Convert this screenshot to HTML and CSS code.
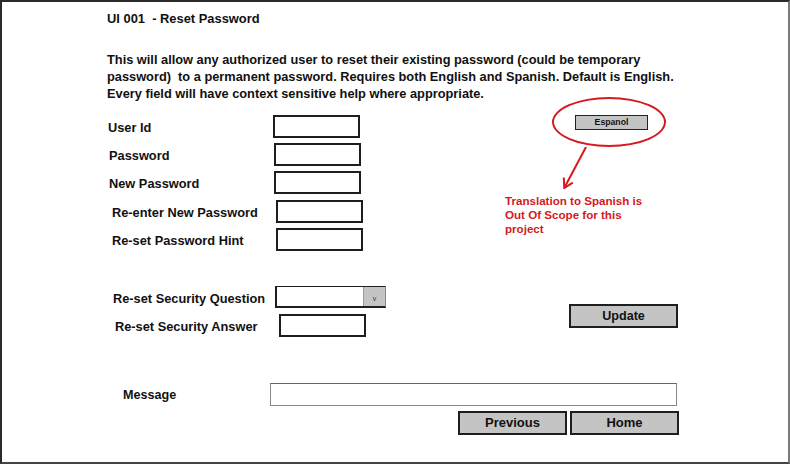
FILE: index.html
```html
<!DOCTYPE html>
<html lang="en">
<head>
<meta charset="utf-8">
<title>UI 001 - Reset Password</title>
<link rel="stylesheet" href="styles.css">
</head>
<body>
<div class="frame">
  <h1 class="title">UI 001&nbsp; - Reset Password</h1>
  <p class="desc">This will allow any authorized user to reset their existing password (could be temporary<br>password)&nbsp; to a permanent password. Requires both English and Spanish. Default is English.<br>Every field will have context sensitive help where appropriate.</p>

  <div class="form-area">
    <div class="fields">
      <div class="row r-a"><label class="lbl">User Id</label><div class="box"></div></div>
      <div class="row r-b gap5"><label class="lbl">Password</label><div class="box"></div></div>
      <div class="row r-b gap5"><label class="lbl">New Password</label><div class="box"></div></div>
      <div class="row r-c gap6"><label class="lbl">Re-enter New Password</label><div class="box"></div></div>
      <div class="row r-c gap5"><label class="lbl">Re-set Password Hint</label><div class="box"></div></div>
      <div class="row r-d gap-big"><label class="lbl">Re-set Security Question</label>
        <div class="select"><div class="select-field"></div><div class="select-btn">v</div></div>
      </div>
      <div class="row r-e gap6"><label class="lbl">Re-set Security Answer</label><div class="box"></div></div>
    </div>

    <div class="side">
      <div class="callout">
        <div class="btn-small">Espanol</div>
      </div>
      <svg class="arrow" width="40" height="42" viewBox="0 0 40 42">
        <path d="M29 0 L7.5 40.5" fill="none" stroke="#d41920" stroke-width="2"/>
        <path d="M6.8 30.5 L7.3 41 L15.8 35.6" fill="none" stroke="#d41920" stroke-width="2" stroke-linejoin="miter"/>
      </svg>
      <p class="note">Translation to Spanish is<br>Out Of Scope for this<br>project</p>
      <div class="btn btn-update">Update</div>
    </div>
  </div>

  <div class="msg-row">
    <span class="msg-lbl">Message</span>
    <div class="msg-box"></div>
  </div>
  <div class="nav-row">
    <div class="btn btn-nav">Previous</div>
    <div class="btn btn-nav">Home</div>
  </div>
</div>
</body>
</html>
```

FILE: styles.css
```css
html, body {
  margin: 0;
  padding: 0;
  background: #fff;
}

.frame {
  box-sizing: border-box;
  width: 790px;
  height: 464px;
  border: 2px solid #2a2a2a;
  border-right-color: #7a7a7a;
  border-bottom-color: #444;
  padding: 9px 0 0 105px;
  font-family: "Liberation Sans", Arial, sans-serif;
  color: #111;
}

.title {
  margin: 0;
  font-size: 12.9px;
  line-height: 16px;
  font-weight: bold;
  white-space: nowrap;
}

.desc {
  margin: 24px 0 0 0;
  font-size: 12.8px;
  line-height: 17px;
  font-weight: bold;
  white-space: nowrap;
}

.form-area {
  display: flex;
  margin-top: 13px;
}

.fields {
  width: 398px;
  display: flex;
  flex-direction: column;
}

.row {
  display: flex;
  align-items: center;
}

.lbl {
  font-size: 12.8px;
  font-weight: bold;
  line-height: 15px;
  padding-top: 2px;
  white-space: nowrap;
  flex: none;
}

.r-a { padding-left: 1px; }
.r-a .lbl { width: 165px; }
.r-b { padding-left: 2px; }
.r-b .lbl { width: 165px; }
.r-c { padding-left: 5px; }
.r-c .lbl { width: 164px; }
.r-d { padding-left: 6px; }
.r-d .lbl { width: 162px; }
.r-e { padding-left: 8px; }
.r-e .lbl { width: 164px; }

.gap5 { margin-top: 5px; }
.gap6 { margin-top: 6px; }
.gap-big { margin-top: 35px; }

.box {
  box-sizing: border-box;
  width: 87px;
  height: 23px;
  border: 2px solid #1e1e1e;
  background: #fff;
}

.select {
  box-sizing: border-box;
  display: flex;
  width: 111px;
  height: 22px;
  border: 2px solid #1e1e1e;
  border-right: 1px solid #888;
  border-top-width: 1.5px;
}

.select-field {
  flex: 1;
  background: #fff;
}

.select-btn {
  width: 22px;
  background: #c4c4c4;
  border-left: 1px solid #9a9a9a;
  font-size: 7px;
  line-height: 7px;
  color: #333;
  display: flex;
  align-items: flex-end;
  justify-content: center;
  padding-bottom: 4px;
  box-sizing: border-box;
}

.side {
  display: flex;
  flex-direction: column;
  align-items: flex-start;
}

.callout {
  box-sizing: border-box;
  width: 114px;
  height: 50px;
  margin: -18px 0 0 47px;
  border: 2px solid #d41920;
  border-radius: 50%;
  display: flex;
  align-items: center;
  justify-content: center;
  padding-left: 5px;
}

.btn-small {
  box-sizing: border-box;
  width: 73px;
  height: 15px;
  background: #c4c4c4;
  border: 1.5px solid #222;
  font-size: 8.7px;
  font-weight: bold;
  line-height: 12px;
  text-align: center;
}

.arrow {
  display: block;
  margin-left: 52px;
}

.note {
  margin: 5px 0 0 0;
  color: #d41920;
  font-size: 11.6px;
  line-height: 14px;
  font-weight: bold;
  white-space: nowrap;
}

.btn {
  box-sizing: border-box;
  background: #c4c4c4;
  border: 2px solid #1e1e1e;
  font-weight: bold;
  text-align: center;
  color: #111;
}

.btn-update {
  width: 109px;
  height: 24px;
  margin: 68px 0 0 64px;
  font-size: 12.6px;
  line-height: 20px;
}

.msg-row {
  display: flex;
  align-items: center;
  margin-top: 46px;
  padding-left: 16px;
}

.msg-lbl {
  width: 147px;
  flex: none;
  font-size: 12.6px;
  font-weight: bold;
  padding-top: 1px;
}

.msg-box {
  box-sizing: border-box;
  width: 407px;
  height: 23px;
  border: 1px solid #888;
  border-top-color: #666;
  background: #fff;
}

.nav-row {
  display: flex;
  gap: 3px;
  margin-top: 5px;
  padding-left: 351px;
}

.btn-nav {
  width: 109px;
  height: 24px;
  font-size: 13px;
  line-height: 20px;
}
```
